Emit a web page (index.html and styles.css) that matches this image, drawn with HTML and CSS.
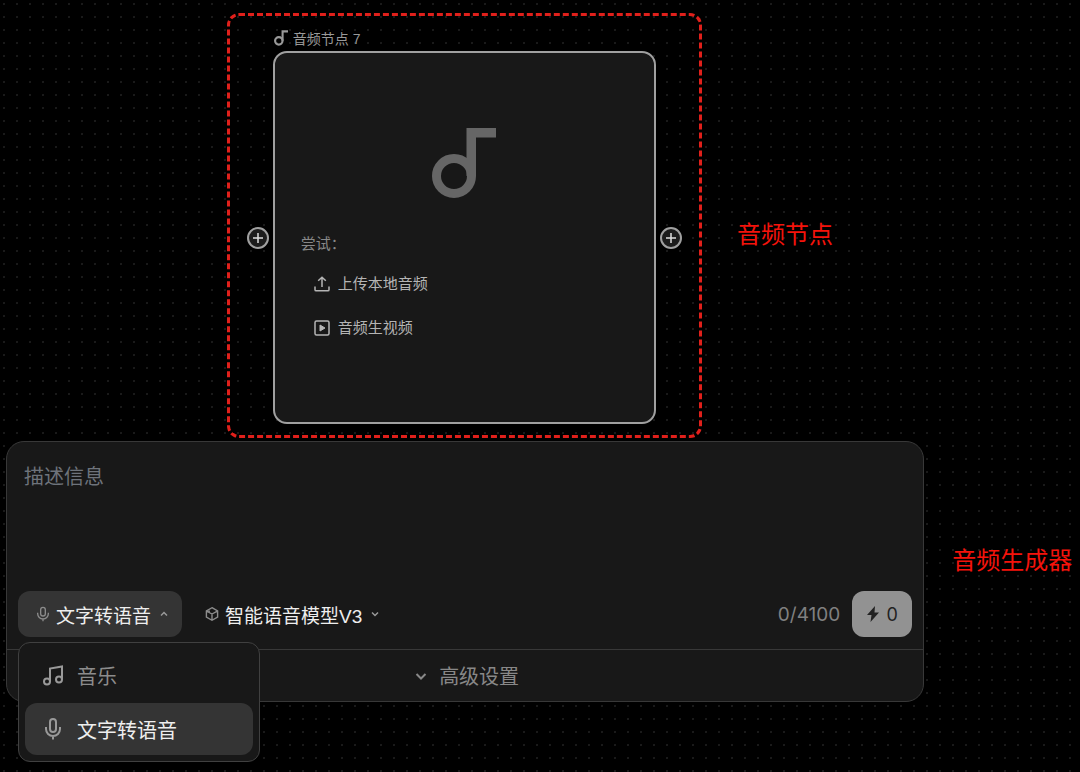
FILE: index.html
```html
<!DOCTYPE html>
<html lang="zh-CN">

<head>
    <meta charset="utf-8">
    <meta name="viewport" content="width=device-width, initial-scale=1">
    <title>音频节点</title>
    <link rel="stylesheet" href="styles.css">
</head>

<body>
    <main class="canvas">

        <!-- 音频节点 -->
        <section class="node-row">
            <div class="frame">
                <h2 class="node-title">
                    <svg class="title-icon" viewBox="0 0 64 72" aria-hidden="true">
                        <circle cx="22" cy="49" r="17" fill="none" stroke="currentColor" stroke-width="10" />
                        <path d="M34.500 1H64v9.500H44V49h-9.500z" fill="currentColor" />
                    </svg>
                    音频节点 7
                </h2>
                <div class="node-body">
                    <button class="plus" type="button" aria-label="添加输入">
                        <svg viewBox="0 0 22 22"><path d="M11 6v10M6 11h10" /></svg>
                    </button>
                    <div class="card">
                        <svg class="note" viewBox="0 0 64 72" aria-hidden="true">
                            <circle cx="22" cy="49" r="17.500" fill="none" stroke="currentColor" stroke-width="9" />
                            <path d="M34.500 1H64v9.500H44V49h-9.500z" fill="currentColor" />
                        </svg>
                        <p class="try">尝试：</p>
                        <button class="action" type="button">
                            <svg viewBox="0 0 16 16"><path d="M8 11V1.2M4.2 4.8 8 1.2l3.800 3.600M1 10.500v3.200c0 .7.500 1.100 1.100 1.100h11.800c.6 0 1.100-.4 1.100-1.100v-3.200" /></svg>
                            上传本地音频
                        </button>
                        <button class="action" type="button">
                            <svg viewBox="0 0 16 16">
                                <rect x="1" y="1" width="14" height="14" rx="1.500" />
                                <path d="M6 5v6l5-3z" fill="currentColor" stroke-width="1" />
                            </svg>
                            音频生视频
                        </button>
                    </div>
                    <button class="plus" type="button" aria-label="添加输出">
                        <svg viewBox="0 0 22 22"><path d="M11 6v10M6 11h10" /></svg>
                    </button>
                </div>
            </div>
            <p class="mark mark-node">音频节点</p>
        </section>

        <!-- 音频生成器 -->
        <section class="maker-row">
            <form class="maker">
                <textarea class="prompt" placeholder="描述信息" aria-label="描述信息"></textarea>
                <div class="toolbar">
                    <div class="mode">
                        <button class="pick pick-open" type="button" aria-haspopup="true" aria-expanded="true">
                            <svg class="small-icon" viewBox="0 0 20 24">
                                <rect x="6.500" y="2" width="7" height="13" rx="3.500" />
                                <path d="M2 10v1.500a8 8 0 0 0 16 0V10M10 19.500V23" />
                            </svg>
                            <span>文字转语音</span>
                            <svg class="caret" viewBox="0 0 8 8"><path d="M1 5.500l3-3 3 3" /></svg>
                        </button>
                        <div class="menu" role="menu">
                            <button class="item" type="button" role="menuitem">
                                <svg viewBox="0 0 22 22">
                                    <circle cx="5" cy="17.500" r="3" />
                                    <circle cx="17" cy="15.500" r="3" />
                                    <path d="M8 17.500V4.500l12-2v13" />
                                </svg>
                                音乐
                            </button>
                            <button class="item item-on" type="button" role="menuitem">
                                <svg viewBox="0 0 22 22">
                                    <rect x="8" y="1" width="6" height="13" rx="3" />
                                    <path d="M4 9v2a7 7 0 0 0 14 0V9M11 18v3.500" />
                                </svg>
                                文字转语音
                            </button>
                        </div>
                    </div>
                    <button class="pick" type="button">
                        <svg class="small-icon" viewBox="0 0 20 20">
                            <path d="M10 1l8 4.500v9L10 19l-8-4.500v-9zM2.500 6l7.500 4 7.500-4M10 10v9M6 8V5" />
                        </svg>
                        <span>智能语音模型V3</span>
                        <svg class="caret" viewBox="0 0 8 8"><path d="M1 2.500l3 3 3-3" /></svg>
                    </button>
                    <span class="count">0/4100</span>
                    <button class="send" type="submit">
                        <svg viewBox="0 0 12 16"><path d="M8 0 0 9h4.500L3.500 16 12 6.500H7.500z" fill="currentColor" /></svg>
                        0
                    </button>
                </div>
                <button class="advanced" type="button">
                    <svg viewBox="0 0 12 12"><path d="M1.500 4l4.500 4.500L10.500 4" /></svg>
                    高级设置
                </button>
            </form>
            <p class="mark mark-maker">音频生成器</p>
        </section>

    </main>
</body>

</html>
```

FILE: styles.css
```css
* {
    box-sizing: border-box;
}

body {
    margin: 0;
    background: #000;
    color: #b4b4b4;
    font-family: "Liberation Sans", "Noto Sans CJK SC", sans-serif;
}

button {
    border: none;
    padding: 0;
    background: none;
    color: inherit;
    font: inherit;
    display: flex;
    align-items: center;
    white-space: nowrap;
}

svg {
    fill: none;
    stroke: currentColor;
    stroke-width: 1.5;
    flex: none;
}

p, h2 {
    margin: 0;
}

/* 点阵背景 */
.canvas {
    min-height: 100vh;
    padding-top: 13px;
    background-image: radial-gradient(circle at 4px 4px, #222 0, #161616 1px, transparent 1px);
    background-size: 13px 13px;
}

.node-row {
    display: flex;
    align-items: center;
    gap: 35px;
    padding-left: 21%;
}

.frame {
    width: 55.7%;
    padding: 12px 17px 11px;
    border: 3px dashed #e0201b;
    border-radius: 12px;
}

.node-title {
    display: flex;
    align-items: center;
    gap: 5px;
    height: 20px;
    margin: 0 0 3px 27px;
    color: #999;
    font-size: 14px;
    font-weight: normal;
}

.title-icon {
    width: 14px;
    height: 16px;
    stroke: none;
}

.node-body {
    display: flex;
    align-items: center;
    gap: 4px;
}

.plus {
    flex: none;
    width: 22px;
    height: 22px;
    border: 2px solid #a0a0a0;
    border-radius: 50%;
    background: #1c1c1c;
    color: #ddd;
    justify-content: center;
}

.plus svg {
    width: 22px;
    height: 22px;
}

.card {
    flex: 1;
    display: flex;
    flex-direction: column;
    align-items: flex-start;
    padding: 74px 26px 82px;
    border: 2px solid #a0a0a0;
    border-radius: 14px;
    background: #181818;
    font-size: 15px;
    line-height: 24px;
}

.note {
    align-self: center;
    width: 64px;
    height: 72px;
    color: #666;
    stroke: none;
}

.try {
    margin-top: 33px;
    color: #888;
}

.action {
    gap: 8px;
    margin: 16px 0 0 13px;
}

.action + .action {
    margin-top: 20px;
}

.action svg {
    width: 16px;
    height: 16px;
}

/* 红色标注 */
.mark {
    color: #f5130b;
    font-size: 24px;
    line-height: 36px;
    white-space: nowrap;
}

.mark-node {
    padding-top: 18px;
}

.mark-maker {
    padding-bottom: 22px;
}

.maker-row {
    display: flex;
    align-items: center;
    gap: 28px;
    margin-top: 3px;
    padding-left: 6px;
}

.maker {
    width: 85.5%;
    border: 1px solid #383838;
    border-radius: 18px;
    background: #181818;
}

.prompt {
    display: block;
    width: 100%;
    height: 149px;
    padding: 20px 17px;
    border: none;
    outline: none;
    resize: none;
    background: none;
    color: #eee;
    font: inherit;
    font-size: 20px;
    line-height: 30px;
}

.prompt::placeholder {
    color: #6e737b;
}

.toolbar {
    display: flex;
    align-items: center;
    padding: 0 11px 12px 11px;
}

.mode {
    position: relative;
}

.pick {
    height: 46px;
    padding: 0 14px 0 18px;
    border-radius: 12px;
    color: #eee;
    font-size: 19px;
}

.mode + .pick {
    margin-left: 5px;
}

.pick-open {
    background: #343434;
}

.small-icon {
    width: 14px;
    height: 16px;
    margin-right: 6px;
    color: #8c8c8c;
    stroke-width: 2;
}

.caret {
    width: 8px;
    height: 8px;
    margin-left: 9px;
    color: #999;
}

.menu {
    position: absolute;
    top: 51px;
    left: 0;
    z-index: 1;
    width: 242px;
    padding: 6px;
    border: 1px solid #404040;
    border-radius: 12px;
    background: #181818;
}

.item {
    width: 100%;
    height: 52px;
    gap: 13px;
    padding-left: 17px;
    border-radius: 12px;
    color: #8c8c8c;
    font-size: 20px;
}

.item + .item {
    margin-top: 2px;
}

.item-on {
    background: #343434;
    color: #eee;
}

.item svg {
    width: 22px;
    height: 22px;
    color: #999;
    stroke-width: 2;
}

.count {
    margin-left: auto;
    margin-right: 12px;
    color: #808080;
    font-family: Inter, sans-serif;
    font-size: 19px;
}

.send {
    width: 60px;
    height: 46px;
    gap: 8px;
    justify-content: center;
    border-radius: 12px;
    background: #929292;
    color: #222;
    font-family: Inter, sans-serif;
    font-size: 18px;
}

.send svg {
    width: 12px;
    height: 16px;
    stroke: none;
}

.advanced {
    width: 100%;
    height: 52px;
    gap: 12px;
    padding-left: 4px;
    justify-content: center;
    border-top: 1px solid #383838;
    color: #888;
    font-size: 20px;
}

.advanced svg {
    width: 12px;
    height: 12px;
    stroke-width: 2;
}
```
